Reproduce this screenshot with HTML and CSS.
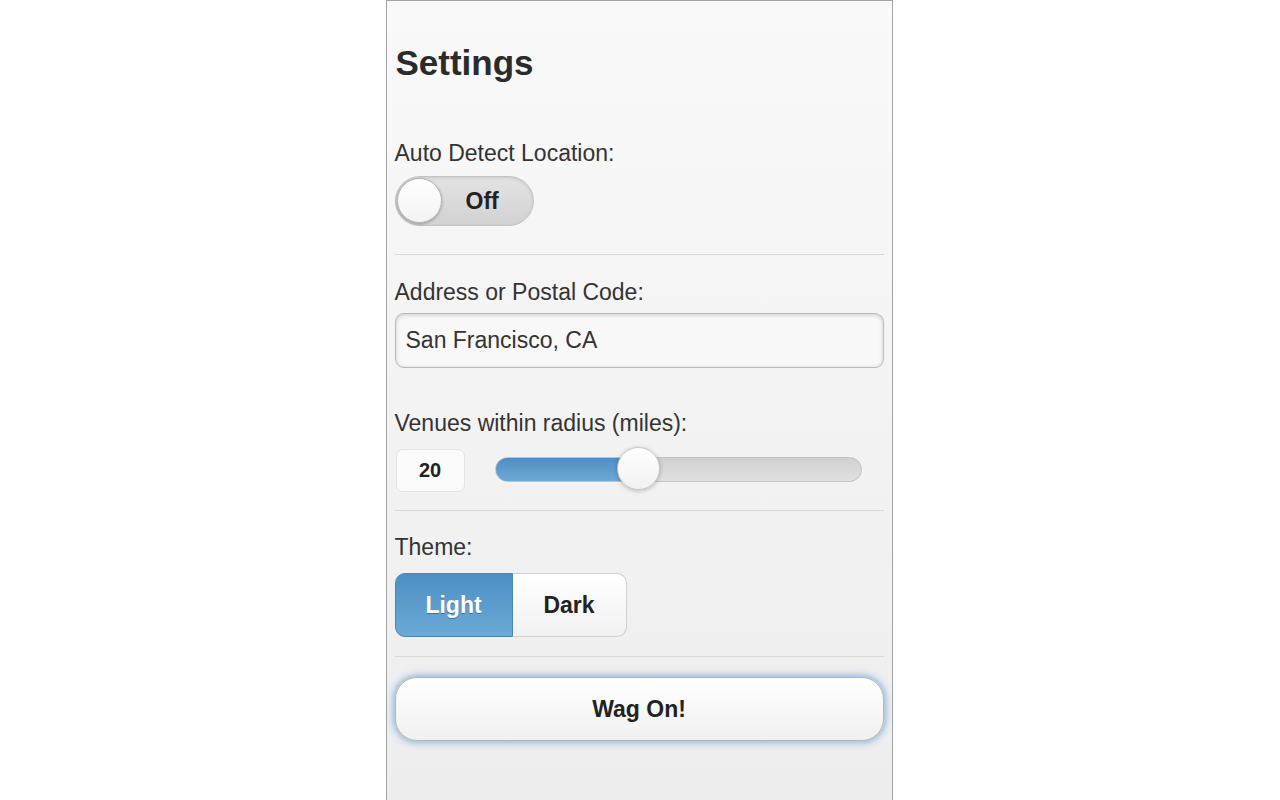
FILE: index.html
```html
<!DOCTYPE html>
<html>
<head>
<meta charset="utf-8">
<title>Settings</title>
<link rel="stylesheet" href="styles.css">
</head>
<body>
<div class="screen">
  <div class="page">
    <h1 class="title">Settings</h1>

    <div class="field field-first bordered">
      <label class="label">Auto Detect Location:</label>
      <div class="toggle">
        <span class="toggle-handle"></span>
        <span class="toggle-text">Off</span>
      </div>
    </div>

    <div class="field field-address">
      <label class="label">Address or Postal Code:</label>
      <div class="input">San Francisco, CA</div>
    </div>

    <div class="field field-radius bordered">
      <label class="label">Venues within radius (miles):</label>
      <div class="slider-row">
        <div class="num-box">20</div>
        <div class="track">
          <div class="track-fill" style="width: 142px"></div>
          <span class="thumb" style="left: 121px"></span>
        </div>
      </div>
    </div>

    <div class="field field-theme bordered">
      <label class="label">Theme:</label>
      <div class="segmented">
        <div class="seg seg-active">Light</div>
        <div class="seg seg-off">Dark</div>
      </div>
    </div>

    <div class="submit">Wag On!</div>
  </div>
</div>
</body>
</html>
```

FILE: styles.css
```css
html, body {
  margin: 0;
  padding: 0;
  background: #ffffff;
  height: 100%;
}

body {
  font-family: "Liberation Sans", Arial, sans-serif;
  color: #333;
}

.screen {
  display: flex;
  justify-content: center;
  height: 800px;
  overflow: hidden;
}

.page {
  width: 489px;
  height: 800px;
  box-sizing: content-box;
  padding: 0 8px;
  border: 1px solid #a4a4a4;
  border-bottom: none;
  background: linear-gradient(#f9f9f9, #ededed);
  margin-left: -2px;
}

.title {
  margin: 42px 0 0 1px;
  font-size: 35px;
  line-height: 40px;
  font-weight: bold;
  color: #2b2b2b;
}

.label {
  display: block;
  font-size: 23px;
  line-height: 28px;
  color: #333;
}

.field.bordered {
  border-bottom: 1px solid #d9d9d9;
}

.field-first {
  margin-top: 56px;
  padding-bottom: 28px;
}

.field-first .label {
  margin-bottom: 9px;
}

.toggle {
  position: relative;
  width: 137px;
  height: 48px;
  border: 1px solid #c4c4c4;
  border-radius: 25px;
  background: linear-gradient(#e3e3e3, #d2d2d2);
  box-shadow: inset 0 1px 3px rgba(0,0,0,0.12);
  display: flex;
  align-items: center;
}

.toggle-handle {
  position: absolute;
  left: 1px;
  top: 1px;
  width: 43px;
  height: 43px;
  border-radius: 50%;
  border: 1px solid #b5b5b5;
  background: linear-gradient(#ffffff, #f3f3f3);
  box-shadow: 0 1px 3px rgba(0,0,0,0.3);
}

.toggle-text {
  margin-left: 70px;
  font-size: 23px;
  font-weight: bold;
  color: #222;
}

.field-address {
  padding-top: 23px;
}

.field-address .label {
  margin-bottom: 7px;
}

.input {
  height: 53px;
  box-sizing: content-box;
  border: 1px solid #b9b9b9;
  border-radius: 9px;
  background: #f8f8f8;
  box-shadow: inset 0 1px 4px rgba(0,0,0,0.18);
  padding: 0 10px;
  font-size: 23px;
  line-height: 53px;
  color: #333;
}

.field-radius {
  padding-top: 41px;
  padding-bottom: 18px;
}

.field-radius .label {
  margin-bottom: 12px;
}

.slider-row {
  display: flex;
  align-items: center;
  height: 43px;
}

.num-box {
  width: 67px;
  height: 41px;
  margin-left: 1px;
  border: 1px solid #e4e4e4;
  border-radius: 7px;
  background: #fbfbfb;
  font-size: 20px;
  font-weight: bold;
  line-height: 41px;
  text-align: center;
  color: #222;
}

.track {
  position: relative;
  margin-left: 30px;
  margin-bottom: 2px;
  width: 365px;
  height: 23px;
  border: 1px solid #c2c2c2;
  border-radius: 13px;
  background: linear-gradient(#d0d0d0, #e0e0e0);
}

.track-fill {
  height: 100%;
  border-radius: 13px 0 0 13px;
  background: linear-gradient(#4f8ec3, #6caad5);
}

.thumb {
  position: absolute;
  top: -11px;
  width: 41px;
  height: 41px;
  border-radius: 50%;
  border: 1px solid #c6c6c6;
  background: linear-gradient(#ffffff, #f1f1f1);
  box-shadow: 0 1px 4px rgba(0,0,0,0.25);
}

.field-theme {
  padding-top: 22px;
  padding-bottom: 19px;
}

.field-theme .label {
  margin-bottom: 12px;
}

.segmented {
  display: flex;
  width: 232px;
  height: 64px;
}

.seg {
  display: flex;
  align-items: center;
  justify-content: center;
  font-size: 23px;
  font-weight: bold;
  box-sizing: border-box;
}

.seg-active {
  width: 118px;
  border: 1px solid #4a86b8;
  border-radius: 10px 0 0 10px;
  background: linear-gradient(#4e8fc4, #6aaad6);
  color: #fff;
  text-shadow: 0 1px 0 #3a74a8;
}

.seg-off {
  width: 114px;
  border: 1px solid #d0d0d0;
  border-left: none;
  border-radius: 0 10px 10px 0;
  background: linear-gradient(#ffffff, #f1f1f1);
  color: #222;
}

.submit {
  margin-top: 20px;
  height: 62px;
  border: 1px solid #b5b5b5;
  border-radius: 22px;
  background: linear-gradient(#ffffff, #f0f0f0);
  box-shadow: 0 0 3px 2px #b3cde8, 0 0 10px #7ea9d6;
  display: flex;
  align-items: center;
  justify-content: center;
  font-size: 23px;
  font-weight: bold;
  color: #222;
}
```
